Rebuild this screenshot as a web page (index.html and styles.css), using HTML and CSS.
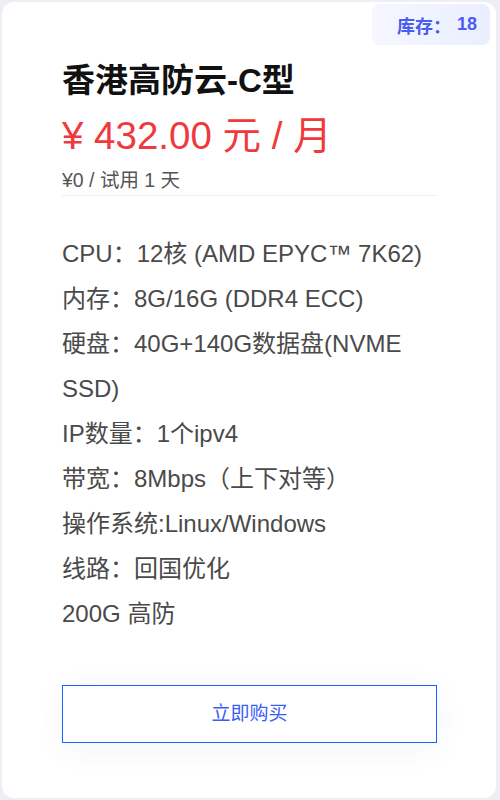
FILE: index.html
```html
<!DOCTYPE html>
<html lang="zh-CN">
<head>
<meta charset="utf-8">
<title>香港高防云-C型</title>
<link rel="stylesheet" href="styles.css">
</head>
<body>
<div class="card">
  <div class="stock">库存：<span class="stock-num">18</span></div>
  <h2 class="title">香港高防云-C型</h2>
  <div class="price">¥ 432.00 元 / 月</div>
  <div class="trial">¥0 / 试用 1 天</div>
  <ul class="specs">
    <li>CPU：12核 (AMD EPYC™ 7K62)</li>
    <li>内存：8G/16G (DDR4 ECC)</li>
    <li>硬盘：40G+140G数据盘(NVME SSD)</li>
    <li>IP数量：1个ipv4</li>
    <li>带宽：8Mbps（上下对等）</li>
    <li>操作系统:Linux/Windows</li>
    <li>线路：回国优化</li>
    <li>200G 高防</li>
  </ul>
  <a class="buy" href="#">立即购买</a>
</div>
</body>
</html>
```
FILE: styles.css
```css
html, body {
  margin: 0;
  padding: 0;
}
body {
  background: #eeeef4;
  font-family: "Liberation Sans", Arial, "Noto Sans CJK SC", sans-serif;
  padding: 2px 4px 2px 2px;
}
.card {
  position: relative;
  box-sizing: border-box;
  height: 796px;
  background: #ffffff;
  border-radius: 12px;
  padding: 55px 59px 0 60px;
}
.stock {
  position: absolute;
  top: 2px;
  right: 6px;
  height: 41px;
  box-sizing: border-box;
  padding: 0 13px 0 25px;
  display: flex;
  align-items: center;
  border-radius: 8px;
  background: linear-gradient(90deg, #f6f7ff, #eaeeff);
  color: #4a5cf2;
  font-weight: bold;
  font-size: 18px;
}
.stock-num {
  margin-left: 6px;
}
.title {
  margin: 0;
  font-size: 33px;
  line-height: 48px;
  font-weight: bold;
  color: #111111;
}
.price {
  margin-top: 1px;
  font-size: 38.5px;
  line-height: 60px;
  color: #f0393c;
}
.trial {
  font-size: 19.5px;
  line-height: 29px;
  color: #555555;
  border-bottom: 1px solid #eeeeee;
}
.specs {
  list-style: none;
  margin: 0;
  padding: 35px 0 0 0;
}
.specs li {
  font-size: 24px;
  line-height: 45px;
  color: #4a4a4a;
}
.buy {
  display: block;
  margin-top: 49px;
  height: 58px;
  box-sizing: border-box;
  border: 1px solid #1663ff;
  color: #3a5cf5;
  text-decoration: none;
  text-align: center;
  line-height: 56px;
  font-size: 19px;
  box-shadow: 0 6px 30px rgba(40, 70, 160, 0.06);
}
```
